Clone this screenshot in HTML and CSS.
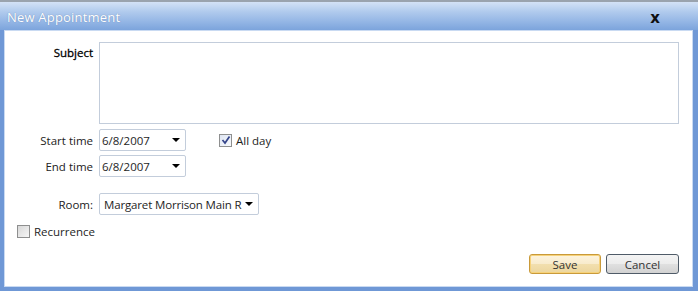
FILE: index.html
```html
<!DOCTYPE html>
<html>
<head>
<meta charset="utf-8">
<link rel="stylesheet" href="styles.css">
</head>
<body>
<div class="window">
  <div class="titlebar">
    <span class="title">New Appointment</span>
    <span class="close">x</span>
  </div>
  <div class="content">
    <div class="form">
      <label class="lbl lbl-subject">Subject</label>
      <div class="textarea"></div>

      <label class="lbl">Start time</label>
      <div class="row">
        <div class="combo date"><span class="val">6/8/2007</span><span class="arrow"></span></div>
        <span class="check checked"><svg width="10" height="10" viewBox="0 0 10 10"><path d="M1.5 5 L4 8 L8.5 1.5" fill="none" stroke="#34448a" stroke-width="1.7"/></svg></span>
        <span class="chk-label">All day</span>
      </div>

      <label class="lbl">End time</label>
      <div class="row">
        <div class="combo date"><span class="val">6/8/2007</span><span class="arrow"></span></div>
      </div>

      <label class="lbl lbl-room">Room:</label>
      <div class="row row-room">
        <div class="combo room"><span class="val">Margaret Morrison Main R</span><span class="arrow"></span></div>
      </div>
    </div>
    <div class="recurrence">
      <span class="check"></span>
      <span class="chk-label">Recurrence</span>
    </div>
    <div class="buttons">
      <button class="btn btn-save">Save</button>
      <button class="btn">Cancel</button>
    </div>
  </div>
</div>
</body>
</html>
```

FILE: styles.css
```css
html, body {
  margin: 0;
  padding: 0;
  background: #ffffff;
}
body {
  font-family: "Open Sans", "Noto Sans", sans-serif;
  font-size: 11.5px;
  color: #1e1e1e;
}
.window {
  width: 698px;
  height: 291px;
  box-sizing: border-box;
  background: #6f98d6;
  border-top: 2px solid #9aa3ae;
  display: flex;
  flex-direction: column;
  padding: 0 5px 4px 4px;
}
.titlebar {
  height: 28px;
  margin: 0 -5px 0 -4px;
  padding: 0 38px 0 7px;
  background: linear-gradient(to bottom, #d3e2f6 0%, #b0caed 35%, #94b6e5 70%, #7ca4dc 100%);
  display: flex;
  align-items: center;
  justify-content: space-between;
}
.title {
  color: #ffffff;
  font-size: 13px;
  letter-spacing: 0.2px;
  text-shadow: 0 0 1px rgba(70,100,150,0.7);
  margin-top: 1px;
}
.close {
  font-family: "DejaVu Sans", sans-serif;
  font-weight: bold;
  font-size: 15px;
  color: #101010;
  margin-top: 4px;
}
.content {
  flex: 1;
  background: #ffffff;
  border: 1px solid #c9daf2;
  display: flex;
  flex-direction: column;
}
.form {
  display: grid;
  grid-template-columns: 88px 1fr;
  column-gap: 6px;
  row-gap: 4px;
  padding: 11px 13px 0 0;
  align-items: center;
}
.lbl {
  text-align: right;
  white-space: nowrap;
  color: #222;
}
.lbl-subject {
  align-self: start;
  color: #000;
  -webkit-text-stroke: 0.3px #000;
  padding-top: 3px;
}
.textarea {
  height: 80px;
  border: 1px solid #c3cddb;
  background: #fff;
  margin-bottom: 1px;
}
.row {
  display: flex;
  align-items: center;
  height: 22px;
}
.row-room {
  margin-top: 12px;
}
.lbl-room {
  margin-top: 12px;
}
.combo {
  box-sizing: border-box;
  height: 22px;
  border: 1px solid #c3cddb;
  border-radius: 2px;
  background: #fff;
  display: flex;
  align-items: center;
  justify-content: space-between;
  padding: 0 5px 0 2px;
  white-space: nowrap;
  overflow: hidden;
}
.date { width: 87px; }
.room { width: 160px; padding-left: 4px; padding-right: 5px; }
.room .val { letter-spacing: -0.15px; }
.val { overflow: hidden; }
.arrow {
  flex: none;
  margin-left: 3px;
  width: 0;
  height: 0;
  border-left: 4px solid transparent;
  border-right: 4px solid transparent;
  border-top: 4px solid #000;
}
.check {
  box-sizing: border-box;
  width: 13px;
  height: 13px;
  border: 1px solid #8e8f8f;
  background: linear-gradient(135deg, #d8d8d8, #f6f6f6);
  display: inline-flex;
  align-items: center;
  justify-content: center;
}
.checked {
  margin-left: 33px;
  background: linear-gradient(135deg, #dfe6f3, #f7f9fc);
}
.chk-label {
  margin-left: 4px;
}
.recurrence {
  display: flex;
  align-items: center;
  margin: 10px 0 0 12px;
  height: 13px;
}
.buttons {
  display: flex;
  justify-content: flex-end;
  gap: 5px;
  padding: 16px 13px 0 0;
}
.btn {
  box-sizing: border-box;
  height: 20px;
  font-family: "Open Sans", "Noto Sans", sans-serif;
  font-size: 11.5px;
  color: #333;
  border: 1px solid #4f5b68;
  border-radius: 3px;
  background: linear-gradient(to bottom, #f4f4f4 0%, #ececec 50%, #e0e0e0 51%, #d2d2d2 100%);
  width: 73px;
  padding: 0;
  line-height: 17px;
}
.btn-save {
  width: 72px;
  border: 1px solid #c99a3a;
  box-shadow: inset 0 0 0 1px #f6d27a;
  background: linear-gradient(to bottom, #fdf4de 0%, #f8ebcc 50%, #f2dfae 51%, #ecd69e 100%);
}
```
